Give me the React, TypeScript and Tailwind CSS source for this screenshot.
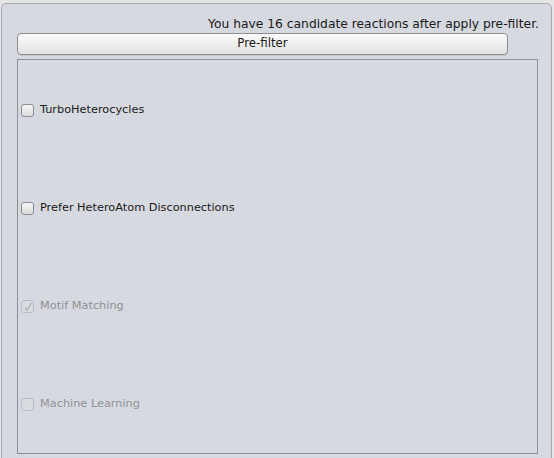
const options = [
  { label: 'TurboHeterocycles', checked: false, disabled: false },
  { label: 'Prefer HeteroAtom Disconnections', checked: false, disabled: false },
  { label: 'Motif Matching', checked: true, disabled: true },
  { label: 'Machine Learning', checked: false, disabled: true },
];

function Check({ checked, disabled }: { checked: boolean; disabled: boolean }) {
  return (
    <span
      className={`flex h-[13px] w-[13px] items-center justify-center rounded-[3px] border ${
        disabled
          ? 'border-[#b9bcc2] bg-[#d9dce1]'
          : 'border-[#8a8d93] bg-gradient-to-b from-[#f6f6f6] to-[#dadada]'
      }`}
    >
      {checked && (
        <svg width="10" height="10" viewBox="0 0 10 10" fill="none">
          <path d="M2 5.5 L4 8.5 L8.5 1" stroke={disabled ? '#a6a9ae' : '#333'} strokeWidth="1.2" />
        </svg>
      )}
    </span>
  );
}

export default function App() {
  return (
    <div
      className="h-[458px] w-[554px] overflow-hidden bg-[#e6e6e6] pt-[3px] text-[12px] text-[#1a1a1a]"
      style={{ fontFamily: '"DejaVu Sans", "Liberation Sans", sans-serif' }}
    >
      <div className="ml-[1px] mr-[2px] h-[470px] rounded-t-[5px] border border-[#a6a8ad] bg-[#d6d9df] pt-[13px]">
        <div className="flex justify-end pr-[12px] text-[12.3px] leading-[14px]">
          You have 16 candidate reactions after apply pre-filter.
        </div>
        <div className="ml-[15px] mr-[43px] mt-[2px] flex h-[22px] items-center justify-center rounded-[4px] border border-[#8b8d91] bg-gradient-to-b from-[#fbfbfb] to-[#e2e2e2] text-[11.8px] shadow-[0_1px_0_#c4c6ca]">
          Pre-filter
        </div>
        <div className="ml-[15px] mr-[13px] mt-[4px] grid h-[395px] grid-rows-4 border border-[#8e9096]">
          {options.map((o) => (
            <label key={o.label} className="flex items-center gap-[6px] pl-[3px] pt-[2px]">
              <Check checked={o.checked} disabled={o.disabled} />
              <span className={`text-[11.3px] ${o.disabled ? 'text-[#8f9196]' : ''}`}>{o.label}</span>
            </label>
          ))}
        </div>
      </div>
    </div>
  );
}
